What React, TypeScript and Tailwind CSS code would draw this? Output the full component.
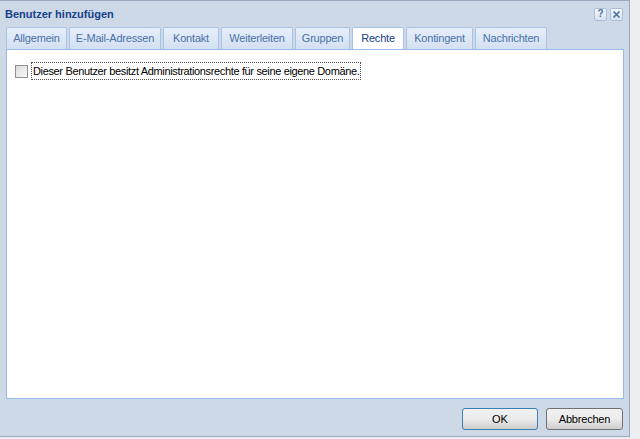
import React from "react";

const tabs = [
  { label: "Allgemein", w: 61 },
  { label: "E-Mail-Adressen", w: 92 },
  { label: "Kontakt", w: 56 },
  { label: "Weiterleiten", w: 72 },
  { label: "Gruppen", w: 55 },
  { label: "Rechte", w: 52, active: true },
  { label: "Kontingent", w: 67 },
  { label: "Nachrichten", w: 72 },
];

export default function App() {
  return (
    <div
      className="w-[640px] h-[439px] bg-[#eceef1] overflow-hidden"
      style={{ fontFamily: "'Liberation Sans', Arial, sans-serif" }}
    >
      <div className="w-[630px] h-[437px] bg-[#ced9e7] border-t border-r border-b border-[#99a8bd] flex flex-col">
        {/* header */}
        <div className="h-[26px] flex items-center justify-between pl-[5px] pr-[6px]">
          <span className="text-[11px] font-bold text-[#15428b]">Benutzer hinzufügen</span>
          <div className="flex gap-[3px]">
            <div className="w-[13px] h-[13px] rounded-[2px] bg-gradient-to-b from-[#f4f8fd] to-[#d5e2f2] border border-[#a9bfd9] flex items-center justify-center text-[10px] font-bold text-[#4b6c98] leading-none">?</div>
            <div className="w-[13px] h-[13px] rounded-[2px] bg-gradient-to-b from-[#f4f8fd] to-[#d5e2f2] border border-[#a9bfd9] flex items-center justify-center">
              <svg width="9" height="9" viewBox="0 0 9 9">
                <path d="M1.5 1.5 L7.5 7.5 M7.5 1.5 L1.5 7.5" stroke="#4b6c98" strokeWidth="1.6" />
              </svg>
            </div>
          </div>
        </div>
        {/* tabs */}
        <div className="flex pl-[6px] gap-[2px] h-[22px] items-end">
          {tabs.map((t) => (
            <div
              key={t.label}
              style={{ width: t.w }}
              className={
                "h-[22px] flex items-center justify-center text-[11px] tracking-[-0.2px] rounded-t-[2px] border border-b-0 " +
                (t.active
                  ? "bg-white border-[#a9c3e6] text-[#15428b]"
                  : "bg-gradient-to-b from-[#e6eefa] to-[#d3e0f1] border-[#a9c3e6] text-[#4a72a8]")
              }
            >
              {t.label}
            </div>
          ))}
        </div>
        {/* body */}
        <div className="mx-[6px] w-[618px] h-[350px] bg-white border border-[#99bbe8] pt-[12px] pl-[8px]">
          <label className="flex items-center gap-[3px]">
            <span className="w-[13px] h-[13px] border border-[#8f8f8f] bg-gradient-to-br from-[#dcdcdc] to-[#f8f8f8]" />
            <span className="text-[11px] text-black tracking-[-0.35px] border border-dotted border-[#555] px-[1px] leading-[16px]">
              Dieser Benutzer besitzt Administrationsrechte für seine eigene Domäne.
            </span>
          </label>
        </div>
        {/* footer */}
        <div className="flex justify-end gap-[8px] pr-[6px] pt-[9px]">
          <button className="w-[76px] h-[22px] rounded-[3px] border border-[#3c7fb1] bg-gradient-to-b from-[#f2f2f2] via-[#ebebeb] to-[#cfcfcf] text-[11px] text-black">
            OK
          </button>
          <button className="w-[77px] h-[22px] rounded-[3px] border border-[#707070] bg-gradient-to-b from-[#f2f2f2] via-[#ebebeb] to-[#cfcfcf] text-[11px] text-black tracking-[-0.2px]">
            Abbrechen
          </button>
        </div>
      </div>
    </div>
  );
}
